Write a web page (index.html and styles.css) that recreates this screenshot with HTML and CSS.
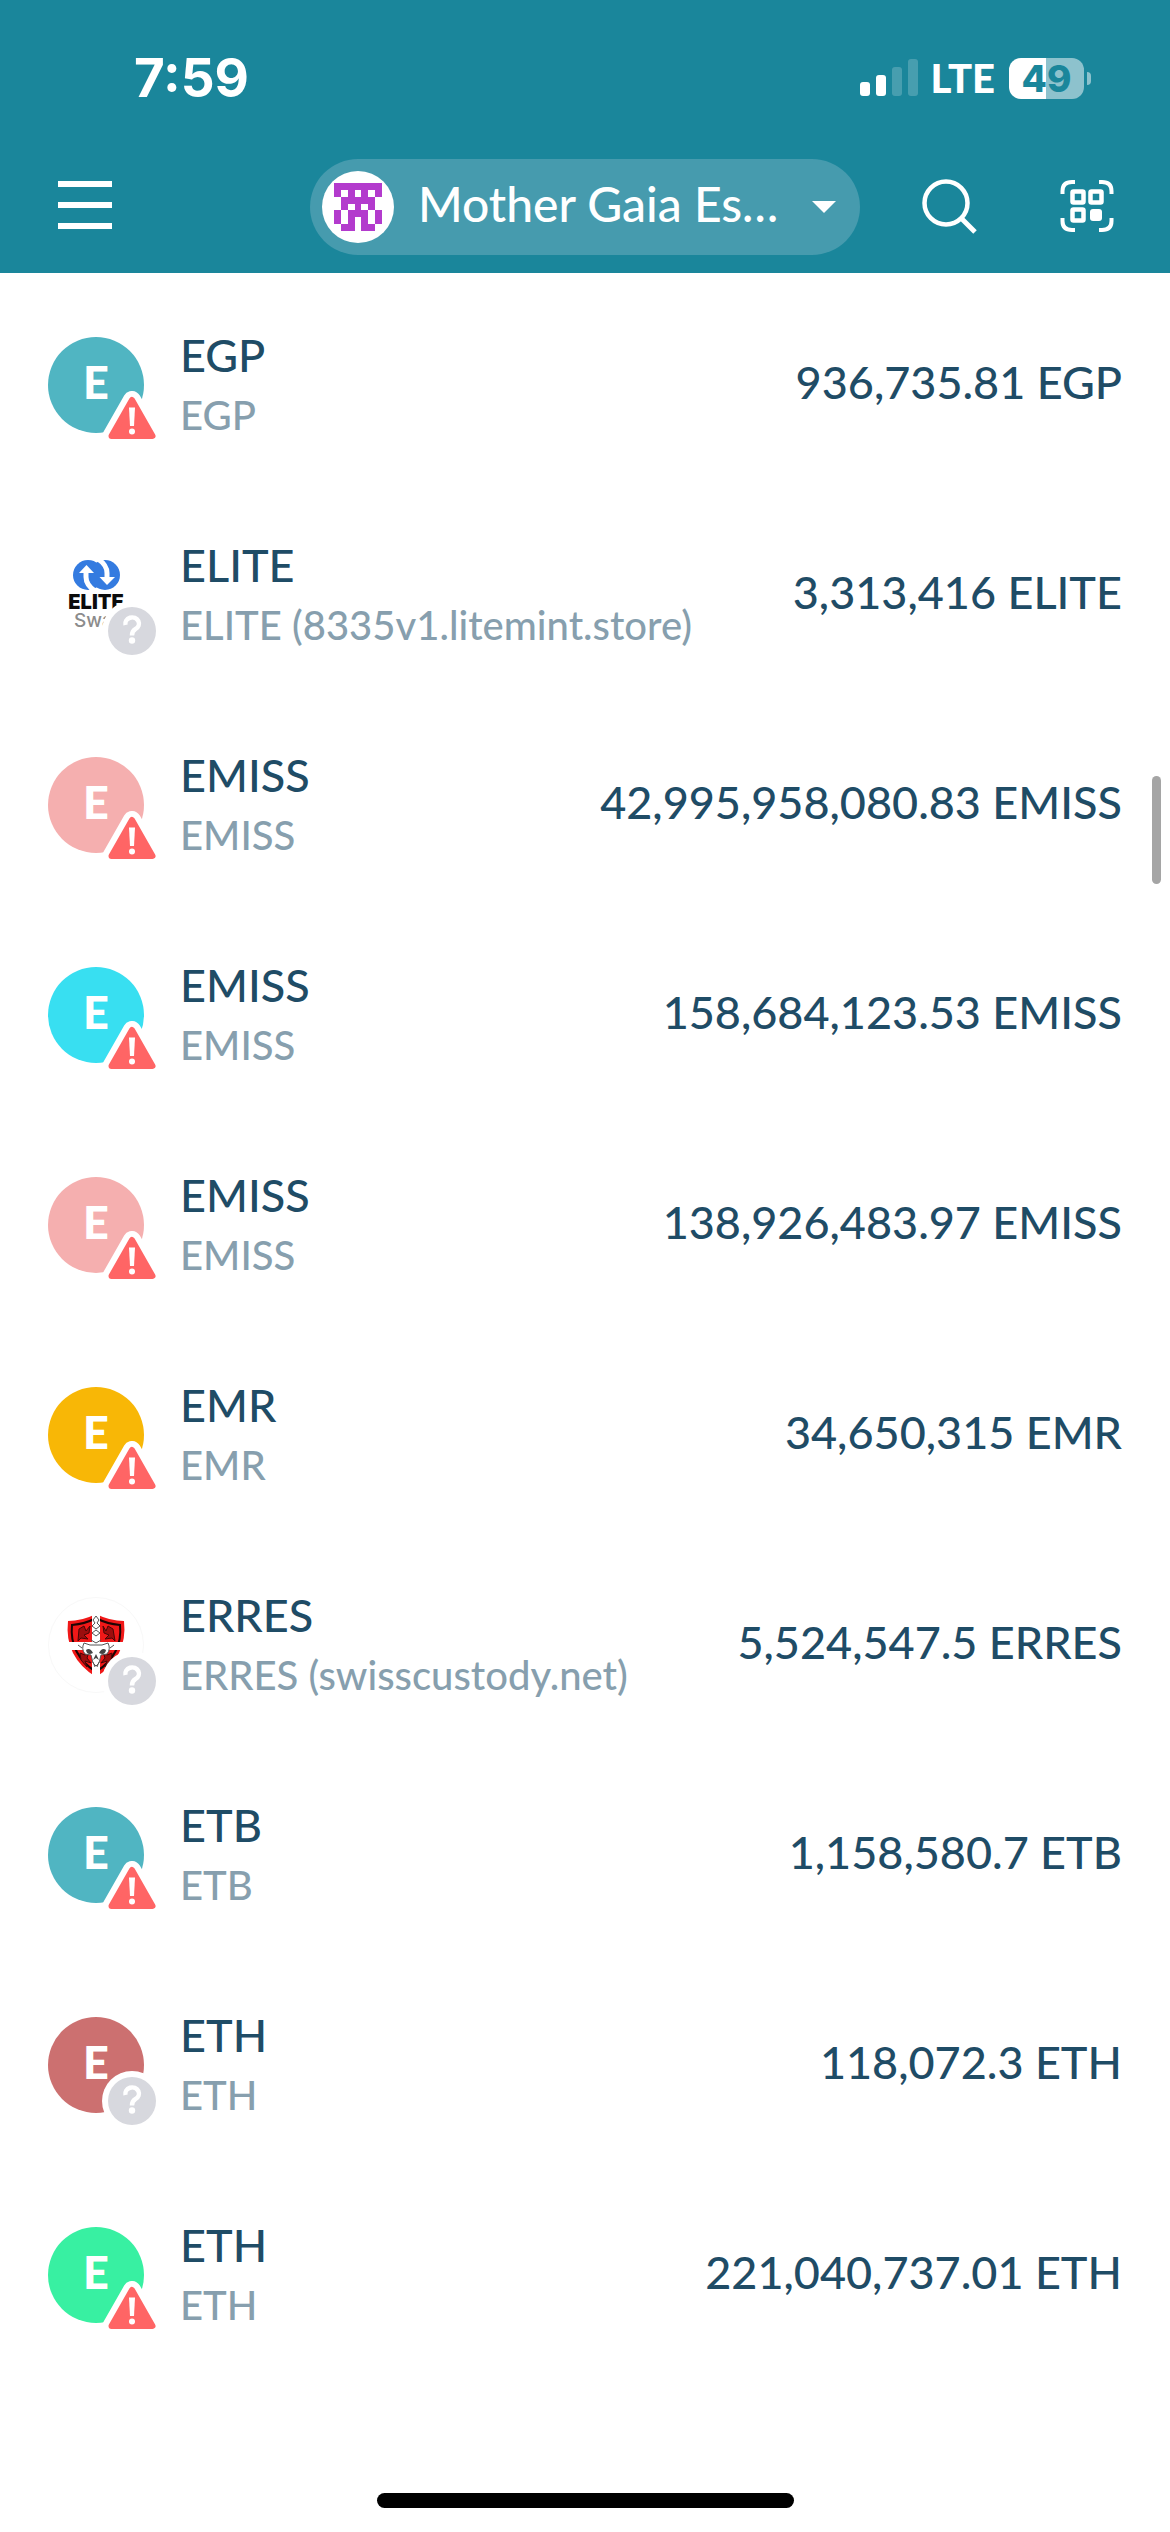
FILE: index.html
```
<!DOCTYPE html>
<html lang="en">
<head>
<meta charset="utf-8">
<meta name="viewport" content="width=device-width, initial-scale=1">
<title>Assets</title>
<link rel="stylesheet" href="styles.css">
</head>
<body>
<svg class="defs" aria-hidden="true">
  <symbol id="warn" viewBox="0 0 60 60">
    <path d="M30 9 L50.500 45 H9.500 Z" fill="#fff" stroke="#fff" stroke-width="18" stroke-linejoin="round"/>
    <path d="M30 9 L50.500 45 H9.500 Z" fill="#ff6565" stroke="#ff6565" stroke-width="6" stroke-linejoin="round"/>
    <path d="M27 16.500 H33 L32 35 H28 Z" fill="#fff"/>
    <circle cx="30" cy="40.500" r="3" fill="#fff"/>
  </symbol>
  <symbol id="unknown" viewBox="0 0 60 60">
    <circle cx="30" cy="30" r="30" fill="#fff"/>
    <circle cx="30" cy="30" r="24" fill="#d7d8de"/>
    <path d="M23.500 24 A6.800 6.200 0 1 1 33.500 28 Q30 30 30 34.500" fill="none" stroke="#fff" stroke-width="4.500"/>
    <circle cx="30" cy="39.500" r="3.200" fill="#fff"/>
  </symbol>
</svg>

<header class="header">
  <div class="status">
    <span class="time">7:59</span>
    <div class="signals">
      <svg width="58" height="38" viewBox="0 0 58 38" fill="#fff" aria-hidden="true">
        <rect y="23" width="10" height="14" rx="3"/>
        <rect x="16" y="16" width="10" height="21" rx="3"/>
        <rect x="32" y="8" width="10" height="29" rx="3" opacity=".2"/>
        <rect x="48" width="10" height="37" rx="3" opacity=".2"/>
      </svg>
      <span class="network">LTE</span>
      <span class="battery">49</span>
    </div>
  </div>
  <nav class="nav">
    <button class="icon-button menu" aria-label="Menu">
      <svg width="54" height="54" viewBox="0 0 54 54" stroke="#fff" stroke-width="6" aria-hidden="true"><path d="M0 4H54M0 25H54M0 46H54"/></svg>
    </button>
    <button class="account">
      <svg class="identicon" width="72" height="72" viewBox="0 0 72 72" aria-hidden="true">
        <circle cx="36" cy="36" r="36" fill="#fff"/>
        <g transform="translate(12 12) scale(6.857)" fill="#b33bcd" shape-rendering="crispEdges">
          <path d="M0 0H7V2H6V1H5V2H6V4H7V6H6V7H4V5H3V7H1V6H0V4H1V2H0ZM1 1V2H2V1ZM3 1V2H4V1ZM2 3V4H3V3ZM4 3V4H5V3ZM1 4V6H2V4ZM5 4V6H6V4Z" fill-rule="evenodd"/>
        </g>
      </svg>
      <span class="account-name">Mother Gaia Es…</span>
      <svg width="24" height="12" viewBox="0 0 24 12" aria-hidden="true"><path d="M0 0H24L12 12Z" fill="#fff"/></svg>
    </button>
    <div class="actions">
      <button class="icon-button" aria-label="Search">
        <svg width="56" height="56" viewBox="0 0 56 56" fill="none" stroke="#fff" aria-hidden="true"><circle cx="24" cy="24" r="21.500" stroke-width="4.500"/><path d="M39 39L53 53" stroke-width="5"/></svg>
      </button>
      <button class="icon-button" aria-label="Scan code">
        <svg width="54" height="54" viewBox="0 0 54 54" fill="none" stroke="#fff" stroke-width="4" aria-hidden="true"><path d="M2.500 14V11Q2.500 2 12 2H15M39 2H42Q51.500 2 51.500 11V14M51.500 38V41Q51.500 50 42 50H39M15 50H12Q2.500 50 2.500 41V38"/><rect x="12.500" y="11.500" width="11" height="11" rx="1" stroke-width="4.500"/><rect x="30.500" y="11.500" width="11" height="11" rx="1" stroke-width="4.500"/><rect x="12.500" y="29.500" width="11" height="11" rx="1" stroke-width="4.500"/><rect x="30" y="29" width="12" height="12" rx="3" fill="#fff" stroke="none"/></svg>
      </button>
    </div>
  </nav>
</header>

<main>
  <ul class="assets">
    <li class="asset">
      <div class="avatar teal">E<svg class="badge" role="img" aria-label="Warning"><use href="#warn"/></svg></div>
      <div class="info"><div class="name">EGP</div><div class="issuer">EGP</div></div>
      <div class="amount">936,735.81 EGP</div>
    </li>
    <li class="asset">
      <div class="avatar">
        <svg width="96" height="96" viewBox="0 0 96 96" aria-hidden="true">
          <g fill="#347be0"><circle cx="40" cy="28" r="15"/><circle cx="57" cy="28" r="15"/></g>
          <path d="M38 25V30Q38 38 47 44M59 31V26Q59 18 50 12" fill="none" stroke="#fff" stroke-width="5"/>
          <path d="M31 26L38.500 18L46 26ZM51.500 30H67L59 38Z" fill="#fff"/>
          <text class="logo-title" x="48" y="62" text-anchor="middle">ELITE</text>
          <text class="logo-sub" x="26" y="80">Swap</text>
        </svg>
        <svg class="badge" role="img" aria-label="Unknown"><use href="#unknown"/></svg>
      </div>
      <div class="info"><div class="name">ELITE</div><div class="issuer">ELITE (8335v1.litemint.store)</div></div>
      <div class="amount">3,313,416 ELITE</div>
    </li>
    <li class="asset">
      <div class="avatar pink">E<svg class="badge" role="img" aria-label="Warning"><use href="#warn"/></svg></div>
      <div class="info"><div class="name">EMISS</div><div class="issuer">EMISS</div></div>
      <div class="amount">42,995,958,080.83 EMISS</div>
    </li>
    <li class="asset">
      <div class="avatar cyan">E<svg class="badge" role="img" aria-label="Warning"><use href="#warn"/></svg></div>
      <div class="info"><div class="name">EMISS</div><div class="issuer">EMISS</div></div>
      <div class="amount">158,684,123.53 EMISS</div>
    </li>
    <li class="asset">
      <div class="avatar pink">E<svg class="badge" role="img" aria-label="Warning"><use href="#warn"/></svg></div>
      <div class="info"><div class="name">EMISS</div><div class="issuer">EMISS</div></div>
      <div class="amount">138,926,483.97 EMISS</div>
    </li>
    <li class="asset">
      <div class="avatar amber">E<svg class="badge" role="img" aria-label="Warning"><use href="#warn"/></svg></div>
      <div class="info"><div class="name">EMR</div><div class="issuer">EMR</div></div>
      <div class="amount">34,650,315 EMR</div>
    </li>
    <li class="asset">
      <div class="avatar">
        <svg width="96" height="96" viewBox="0 0 96 96" aria-hidden="true">
          <circle cx="48" cy="48" r="47.500" fill="#fff" stroke="#f8f8f8"/>
          <path d="M20 24Q34 24 48 17Q62 24 76 24Q80 60 48 80Q16 60 20 24Z" fill="#f01818"/>
          <path d="M24 28Q37 27 48 21Q59 27 72 28Q75 57 48 75Q21 57 24 28Z" fill="none" stroke="#1c0505" stroke-width="2"/>
          <path d="M31 32l5-3 2 5 4-5-1 7-5 2 4 4-7-1-3 3zM65 32l-5-3-2 5-3-5 1 7 5 2-4 4 7-1 3 3zM32 56l5 2 4-3-2 6 4 5-6-2 2 6-6-7zM64 56l-5 2-4-3 2 6-4 5 6-2-2 6 6-7z" fill="#9c0d0d" stroke="#480606"/>
          <path d="M44 14H52V45H80V53H52V83H44V53H16V45H44Z" fill="#fff"/>
          <path d="M36 46Q33 52 37 57L43 58L45 66L48 69L51 66L53 58L59 57Q63 52 60 46L54 48H42Z" fill="#fff" stroke="#555" stroke-width="1"/>
          <path d="M38 53Q42 50 45 56Q39 59 38 53ZM58 53Q54 50 51 56Q57 59 58 53ZM48 57L45 63L48 61L51 63Z" fill="#444"/>
          <path d="M45 23l3-4 3 4-2 3 3 3-4 3-4-3 3-3zM44 36l4-3 4 3-4 3zM45 65l2 5M51 65l-2 5M30 48l4 3M66 48l-4 3M43 43l5 3 5-3" fill="none" stroke="#555" stroke-width="1"/>
        </svg>
        <svg class="badge" role="img" aria-label="Unknown"><use href="#unknown"/></svg>
      </div>
      <div class="info"><div class="name">ERRES</div><div class="issuer">ERRES (swisscustody.net)</div></div>
      <div class="amount">5,524,547.5 ERRES</div>
    </li>
    <li class="asset">
      <div class="avatar teal">E<svg class="badge" role="img" aria-label="Warning"><use href="#warn"/></svg></div>
      <div class="info"><div class="name">ETB</div><div class="issuer">ETB</div></div>
      <div class="amount">1,158,580.7 ETB</div>
    </li>
    <li class="asset">
      <div class="avatar red">E<svg class="badge" role="img" aria-label="Unknown"><use href="#unknown"/></svg></div>
      <div class="info"><div class="name">ETH</div><div class="issuer">ETH</div></div>
      <div class="amount">118,072.3 ETH</div>
    </li>
    <li class="asset">
      <div class="avatar green">E<svg class="badge" role="img" aria-label="Warning"><use href="#warn"/></svg></div>
      <div class="info"><div class="name">ETH</div><div class="issuer">ETH</div></div>
      <div class="amount">221,040,737.01 ETH</div>
    </li>
  </ul>
</main>
<div class="scroll-thumb"></div>
<div class="home-indicator"></div>
</body>
</html>
```
FILE: styles.css
```
* { box-sizing: border-box; }

body {
  margin: 0;
  min-height: 100vh;
  display: flex;
  flex-direction: column;
  background: #fff;
  color: #1f4c66;
  font-family: Lato, sans-serif;
  font-size: 45px;
  font-weight: 500;
  line-height: 60px;
}

svg { display: block; flex: none; }
.defs { position: absolute; width: 0; height: 0; }

button {
  margin: 0;
  padding: 0;
  border: 0;
  background: none;
  color: inherit;
  font: inherit;
}

.header { background: #1a869b; color: #fff; }

.status {
  display: flex;
  align-items: center;
  justify-content: space-between;
  height: 141px;
  padding: 15px 86px 0 134px;
}

.time { font: 700 53px/60px Inter, sans-serif; }

.signals { display: flex; align-items: center; }
.network { margin: 0 14px 0 13px; font-size: 40px; font-weight: 900; }

.battery {
  position: relative;
  width: 75px;
  height: 41px;
  border-radius: 12px;
  background: linear-gradient(to right, #fff 37px, #8dc2cd 37px);
  color: #1a869b;
  font: 800 37px/41px Inter, sans-serif;
  text-align: center;
}

.battery::after {
  content: "";
  position: absolute;
  left: 78px;
  top: 14px;
  width: 4px;
  height: 13px;
  border-radius: 0 4px 4px 0;
  background: #8dc2cd;
}

.nav {
  display: grid;
  grid-template-columns: 310px minmax(0, 1fr) 310px;
  align-items: center;
  padding: 18px 0;
}

.menu { justify-self: start; margin-left: 58px; }

.account {
  display: flex;
  align-items: center;
  height: 96px;
  padding: 0 24px 0 12px;
  border-radius: 48px;
  background: #469bae;
}

.account-name {
  flex: 1;
  padding: 0 0 6px 24px;
  overflow: hidden;
  font-size: 48px;
  text-align: left;
  white-space: nowrap;
}

.actions {
  display: flex;
  align-items: center;
  justify-content: flex-end;
  gap: 82px;
  padding-right: 56px;
}

.assets { margin: 0; padding: 7px 0 0; list-style: none; }

.asset {
  display: flex;
  align-items: center;
  height: 210px;
  padding: 0 48px;
}

.avatar {
  position: relative;
  flex: none;
  width: 96px;
  height: 96px;
  border-radius: 50%;
  color: #fff;
  font-weight: 900;
  line-height: 90px;
  text-align: center;
}

.teal { background: #50b5c2; }
.pink { background: #f5afaf; }
.cyan { background: #38dff1; }
.amber { background: #f8b706; }
.red { background: #cc7070; }
.green { background: #38f0a2; }

.badge { position: absolute; left: 54px; top: 54px; width: 60px; height: 60px; }

.logo-title { font: 900 20px Inter, sans-serif; fill: #0b0b0b; }
.logo-sub { font: 500 19px Inter, sans-serif; fill: #8c8c8c; }

.info { flex: 1; padding-left: 36px; white-space: nowrap; }
.issuer { color: #879fae; font-size: 40px; }
.amount { padding-bottom: 6px; white-space: nowrap; }

.scroll-thumb {
  position: fixed;
  top: 776px;
  right: 9px;
  width: 9px;
  height: 108px;
  border-radius: 5px;
  background: #a5a5a5;
}

.home-indicator {
  width: 417px;
  height: 15px;
  margin: auto auto 24px;
  border-radius: 8px;
  background: #000;
}
```
